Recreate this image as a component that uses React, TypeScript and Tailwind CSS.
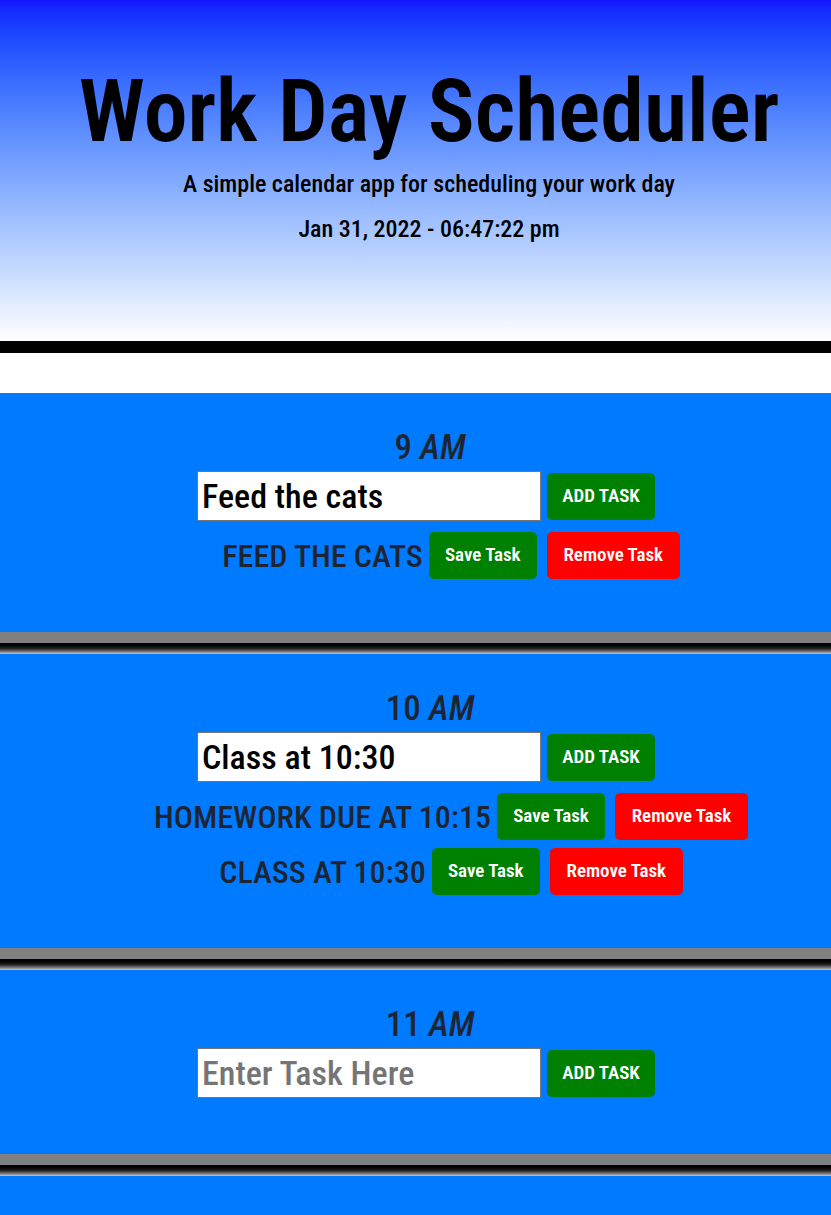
import { useState } from "react";

type Hour = {
  label: string;
  suffix: string;
  draft: string;
  tasks: string[];
};

const initialHours: Hour[] = [
  { label: "9", suffix: "AM", draft: "Feed the cats", tasks: ["Feed the cats"] },
  {
    label: "10",
    suffix: "AM",
    draft: "Class at 10:30",
    tasks: ["Homework due at 10:15", "Class at 10:30"],
  },
  { label: "11", suffix: "AM", draft: "", tasks: [] },
];

function Divider() {
  return (
    <div>
      <div className="h-[11px] bg-[#808080]" />
      <div className="h-[11px] bg-gradient-to-b from-black via-[#222] to-[#c8c8c8]" />
    </div>
  );
}

function HourBlock({
  hour,
  onDraft,
  onAdd,
  onRemove,
}: {
  hour: Hour;
  onDraft: (v: string) => void;
  onAdd: () => void;
  onRemove: (i: number) => void;
}) {
  return (
    <section className="bg-[#007bff] pt-[33px] pb-[49px]">
      {/* hour label */}
      <div className="flex justify-center pl-[29px] text-[35px] font-medium leading-[43px] text-[#1d2533]">
        <span>
          {hour.label} <em>{hour.suffix}</em>
        </span>
      </div>

      {/* new task input */}
      <div className="mt-[2px] flex h-[50px] items-center justify-center pl-[21px]">
        <input
          value={hour.draft}
          onChange={(e) => onDraft(e.target.value)}
          placeholder="Enter Task Here"
          className="h-[50px] w-[344px] border border-[#767676] bg-white px-[4px] text-[34px] font-medium text-black placeholder:text-[#757575] focus:outline-none"
        />
        <button
          onClick={onAdd}
          className="ml-[6px] h-[47px] w-[108px] rounded-[5px] bg-[#008000] text-[19px] font-semibold text-white"
        >
          ADD TASK
        </button>
      </div>

      {/* saved tasks */}
      <div className="mt-[7px]">
        {hour.tasks.map((t, i) => (
          <div
            key={i}
            className="flex h-[55px] items-center justify-center pl-[71px]"
          >
            <span className="text-[32px] font-medium uppercase text-[#1d2533]">
              {t}
            </span>
            <button className="ml-[6px] h-[47px] w-[108px] rounded-[5px] bg-[#008000] text-[19px] font-semibold text-white">
              Save Task
            </button>
            <button
              onClick={() => onRemove(i)}
              className="ml-[10px] h-[47px] w-[133px] rounded-[5px] bg-[#ff0000] text-[19px] font-semibold text-white"
            >
              Remove Task
            </button>
          </div>
        ))}
      </div>
    </section>
  );
}

export default function App() {
  const [hours, setHours] = useState<Hour[]>(initialHours);

  const update = (idx: number, fn: (h: Hour) => Hour) =>
    setHours((prev) => prev.map((h, i) => (i === idx ? fn(h) : h)));

  return (
    <div className="min-h-screen bg-[#007bff] font-['Roboto',sans-serif] font-stretch-condensed">
      <header className="flex h-[341px] flex-col items-center bg-gradient-to-b from-[#1414ff] to-white pl-[27px] pt-[67px] text-black">
        <h1 className="text-[88px] font-semibold leading-none">
          Work Day Scheduler
        </h1>
        <p className="mt-[17px] text-[24px] font-medium leading-none">
          A simple calendar app for scheduling your work day
        </p>
        <p className="mt-[21px] text-[24px] font-medium leading-none">
          Jan 31, 2022 - 06:47:22 pm
        </p>
      </header>
      <div className="h-[12px] bg-black" />
      <div className="h-[40px] bg-white" />

      {hours.map((h, idx) => (
        <div key={idx}>
          <HourBlock
            hour={h}
            onDraft={(v) => update(idx, (x) => ({ ...x, draft: v }))}
            onAdd={() =>
              update(idx, (x) =>
                x.draft.trim() ? { ...x, tasks: [...x.tasks, x.draft] } : x
              )
            }
            onRemove={(i) =>
              update(idx, (x) => ({
                ...x,
                tasks: x.tasks.filter((_, j) => j !== i),
              }))
            }
          />
          <Divider />
        </div>
      ))}
    </div>
  );
}
